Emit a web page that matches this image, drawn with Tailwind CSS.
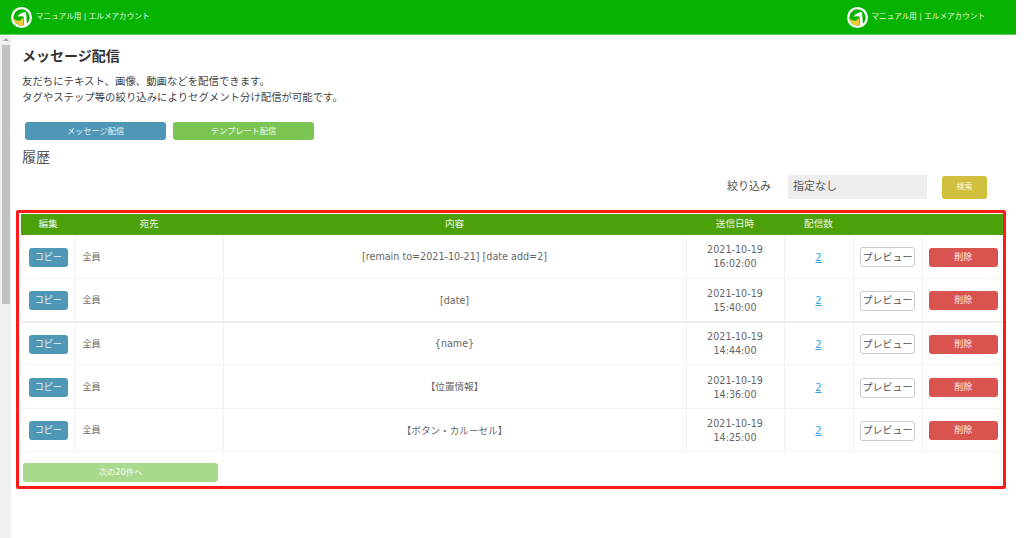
<!DOCTYPE html>
<html lang="ja">
<head>
    <meta charset="UTF-8">
    <meta name="viewport" content="width=device-width, initial-scale=1.0">
    <title>メッセージ配信</title>
    <script src="https://cdn.jsdelivr.net/npm/@tailwindcss/browser@4"></script>
</head>
<body class="bg-white text-[#555] font-['DejaVu_Sans','Noto_Sans_CJK_JP',sans-serif] h-[538px] w-[1024px] overflow-hidden">

    <header class="w-[1016px] h-[35px] bg-[#06b300] border-b border-[#5fd05c] flex justify-between items-center pl-[11px] pr-[31px]">
        <a href="#" class="flex items-center gap-[4px] text-white/90 text-[7.6px]">
            <svg width="21" height="21" viewBox="0 0 21 21">
                <circle cx="10.5" cy="10.5" r="10.5" fill="#fff"/>
                <circle cx="10.5" cy="10.5" r="8.2" fill="#06b300"/>
                <path d="M2.2 11.6 Q5.5 14.5 9 13.4 L12 11 L12.6 18.8 Q9.5 19.4 6.5 17.6 Q3 15.6 2.2 11.6Z" fill="#f1c93b"/>
                <path d="M6.5 9.5 Q9 5.5 15 5 L16 18 L13 19 L12.6 9.4 Q9.5 9 6.5 9.5Z" fill="#fff"/>
            </svg>
            <span>マニュアル用 | エルメアカウント</span>
        </a>
        <a href="#" class="flex items-center gap-[4px] text-white/90 text-[7.6px]">
            <svg width="21" height="21" viewBox="0 0 21 21">
                <circle cx="10.5" cy="10.5" r="10.5" fill="#fff"/>
                <circle cx="10.5" cy="10.5" r="8.2" fill="#06b300"/>
                <path d="M2.2 11.6 Q5.5 14.5 9 13.4 L12 11 L12.6 18.8 Q9.5 19.4 6.5 17.6 Q3 15.6 2.2 11.6Z" fill="#f1c93b"/>
                <path d="M6.5 9.5 Q9 5.5 15 5 L16 18 L13 19 L12.6 9.4 Q9.5 9 6.5 9.5Z" fill="#fff"/>
            </svg>
            <span>マニュアル用 | エルメアカウント</span>
        </a>
    </header>

    <div class="flex h-[503px]">
        <!-- scrollbar -->
        <div class="w-[11px] bg-[#f0f0f0] flex flex-col items-center pt-[3px] shrink-0">
            <div class="w-0 h-0 border-x-[3px] border-x-transparent border-b-[3px] border-b-[#a3a3a3]"></div>
            <div class="w-[8px] h-[259px] bg-[#c1c1c1] mt-[4px]"></div>
        </div>

        <main class="w-[1005px] pl-[5px] pt-[12px]">
            <div class="pl-[6px]">
                <h1 class="text-[14px] leading-[18px] font-bold text-[#333]">メッセージ配信</h1>
                <p class="mt-[8px] text-[10.4px] leading-[16px] text-[#444]">友だちにテキスト、画像、動画などを配信できます。<br>タグやステップ等の絞り込みによりセグメント分け配信が可能です。</p>
                <div class="flex gap-[7px] mt-[17px] ml-[3px]">
                    <button class="w-[141px] h-[18px] rounded-[3px] bg-[#4f97b6] text-white/90 text-[8.2px]">メッセージ配信</button>
                    <button class="w-[141px] h-[18px] rounded-[3px] bg-[#7bc653] text-white/90 text-[8.2px]">テンプレート配信</button>
                </div>
                <h2 class="mt-[8px] text-[14px] leading-[18px] text-[#555]">履歴</h2>
            </div>

            <div class="flex justify-end items-center h-[24px] mt-[9px] pr-[29px]">
                <span class="text-[11px] text-[#555]">絞り込み</span>
                <div class="w-[139px] h-[24px] bg-[#eee] ml-[17px] pl-[5px] text-[11px] leading-[24px] text-[#555]">指定なし</div>
                <button class="w-[45px] h-[23px] rounded-[3px] bg-[#cfbf3d] text-white/90 text-[8px] ml-[15px]">検索</button>
            </div>

            <section class="mt-[11px] w-[990px] h-[279px] border-[3px] border-[#ff1a1a] rounded-[2px] px-[2px] pt-[1px]">
                <table class="w-[982px] table-fixed border-collapse text-[9.6px] text-[#666]">
                    <thead>
                        <tr class="h-[21px] bg-[#4ca00a] text-white/90 font-normal">
                            <th class="w-[54px] font-normal">編集</th>
                            <th class="w-[148px] font-normal">宛先</th>
                            <th class="w-[463px] font-normal">内容</th>
                            <th class="w-[98px] font-normal">送信日時</th>
                            <th class="w-[69px] font-normal">配信数</th>
                            <th class="w-[69px] font-normal"></th>
                            <th class="w-[81px] font-normal"></th>
                        </tr>
                    </thead>
                    <tbody>
                        <tr class="h-[43.3px] border-b border-[#f4f4f4] [&>td]:pt-[2px]">
                            <td class="border-r border-[#f2f2f2] text-center pl-[1px]"><button class="w-[39px] h-[19px] rounded-[3px] bg-[#4f97b6] text-white/90 text-[9px]">コピー</button></td>
                            <td class="border-r border-[#f2f2f2] pl-[7px] text-[9px]">全員</td>
                            <td class="border-r border-[#f2f2f2] text-center">[remain to=2021-10-21] [date add=2]</td>
                            <td class="border-r border-[#f2f2f2] text-center leading-[14px]">2021-10-19<br>16:02:00</td>
                            <td class="border-r border-[#f2f2f2] text-center"><a href="#" class="text-[#30a5e6] underline text-[10px]">2</a></td>
                            <td class="border-r border-[#f2f2f2] text-center"><button class="w-[55px] h-[20px] rounded-[3px] bg-white border border-[#ccc] text-[10px] text-[#555]">プレビュー</button></td>
                            <td class="text-center pl-[1px]"><button class="w-[69px] h-[19px] rounded-[3px] bg-[#d9534f] text-white/90 text-[9px]">削除</button></td>
                        </tr>
                        <tr class="h-[43.3px] border-b-2 border-[#eeeeee] [&>td]:pt-[2px]">
                            <td class="border-r border-[#f2f2f2] text-center pl-[1px]"><button class="w-[39px] h-[19px] rounded-[3px] bg-[#4f97b6] text-white/90 text-[9px]">コピー</button></td>
                            <td class="border-r border-[#f2f2f2] pl-[7px] text-[9px]">全員</td>
                            <td class="border-r border-[#f2f2f2] text-center">[date]</td>
                            <td class="border-r border-[#f2f2f2] text-center leading-[14px]">2021-10-19<br>15:40:00</td>
                            <td class="border-r border-[#f2f2f2] text-center"><a href="#" class="text-[#30a5e6] underline text-[10px]">2</a></td>
                            <td class="border-r border-[#f2f2f2] text-center"><button class="w-[55px] h-[20px] rounded-[3px] bg-white border border-[#ccc] text-[10px] text-[#555]">プレビュー</button></td>
                            <td class="text-center pl-[1px]"><button class="w-[69px] h-[19px] rounded-[3px] bg-[#d9534f] text-white/90 text-[9px]">削除</button></td>
                        </tr>
                        <tr class="h-[43.3px] border-b border-[#f4f4f4] [&>td]:pt-[2px]">
                            <td class="border-r border-[#f2f2f2] text-center pl-[1px]"><button class="w-[39px] h-[19px] rounded-[3px] bg-[#4f97b6] text-white/90 text-[9px]">コピー</button></td>
                            <td class="border-r border-[#f2f2f2] pl-[7px] text-[9px]">全員</td>
                            <td class="border-r border-[#f2f2f2] text-center">{name}</td>
                            <td class="border-r border-[#f2f2f2] text-center leading-[14px]">2021-10-19<br>14:44:00</td>
                            <td class="border-r border-[#f2f2f2] text-center"><a href="#" class="text-[#30a5e6] underline text-[10px]">2</a></td>
                            <td class="border-r border-[#f2f2f2] text-center"><button class="w-[55px] h-[20px] rounded-[3px] bg-white border border-[#ccc] text-[10px] text-[#555]">プレビュー</button></td>
                            <td class="text-center pl-[1px]"><button class="w-[69px] h-[19px] rounded-[3px] bg-[#d9534f] text-white/90 text-[9px]">削除</button></td>
                        </tr>
                        <tr class="h-[43.3px] border-b border-[#f4f4f4] [&>td]:pt-[2px]">
                            <td class="border-r border-[#f2f2f2] text-center pl-[1px]"><button class="w-[39px] h-[19px] rounded-[3px] bg-[#4f97b6] text-white/90 text-[9px]">コピー</button></td>
                            <td class="border-r border-[#f2f2f2] pl-[7px] text-[9px]">全員</td>
                            <td class="border-r border-[#f2f2f2] text-center">【位置情報】</td>
                            <td class="border-r border-[#f2f2f2] text-center leading-[14px]">2021-10-19<br>14:36:00</td>
                            <td class="border-r border-[#f2f2f2] text-center"><a href="#" class="text-[#30a5e6] underline text-[10px]">2</a></td>
                            <td class="border-r border-[#f2f2f2] text-center"><button class="w-[55px] h-[20px] rounded-[3px] bg-white border border-[#ccc] text-[10px] text-[#555]">プレビュー</button></td>
                            <td class="text-center pl-[1px]"><button class="w-[69px] h-[19px] rounded-[3px] bg-[#d9534f] text-white/90 text-[9px]">削除</button></td>
                        </tr>
                        <tr class="h-[43.3px] border-b border-[#f4f4f4] [&>td]:pt-[2px]">
                            <td class="border-r border-[#f2f2f2] text-center pl-[1px]"><button class="w-[39px] h-[19px] rounded-[3px] bg-[#4f97b6] text-white/90 text-[9px]">コピー</button></td>
                            <td class="border-r border-[#f2f2f2] pl-[7px] text-[9px]">全員</td>
                            <td class="border-r border-[#f2f2f2] text-center">【ボタン・カルーセル】</td>
                            <td class="border-r border-[#f2f2f2] text-center leading-[14px]">2021-10-19<br>14:25:00</td>
                            <td class="border-r border-[#f2f2f2] text-center"><a href="#" class="text-[#30a5e6] underline text-[10px]">2</a></td>
                            <td class="border-r border-[#f2f2f2] text-center"><button class="w-[55px] h-[20px] rounded-[3px] bg-white border border-[#ccc] text-[10px] text-[#555]">プレビュー</button></td>
                            <td class="text-center pl-[1px]"><button class="w-[69px] h-[19px] rounded-[3px] bg-[#d9534f] text-white/90 text-[9px]">削除</button></td>
                        </tr>
                    </tbody>
                </table>
                <button class="mt-[11px] ml-[2px] block w-[195px] h-[19px] rounded-[3px] bg-[#a9d98d] text-white/90 text-[8.2px]">次の20件へ</button>
            </section>
        </main>
    </div>
</body>
</html>
